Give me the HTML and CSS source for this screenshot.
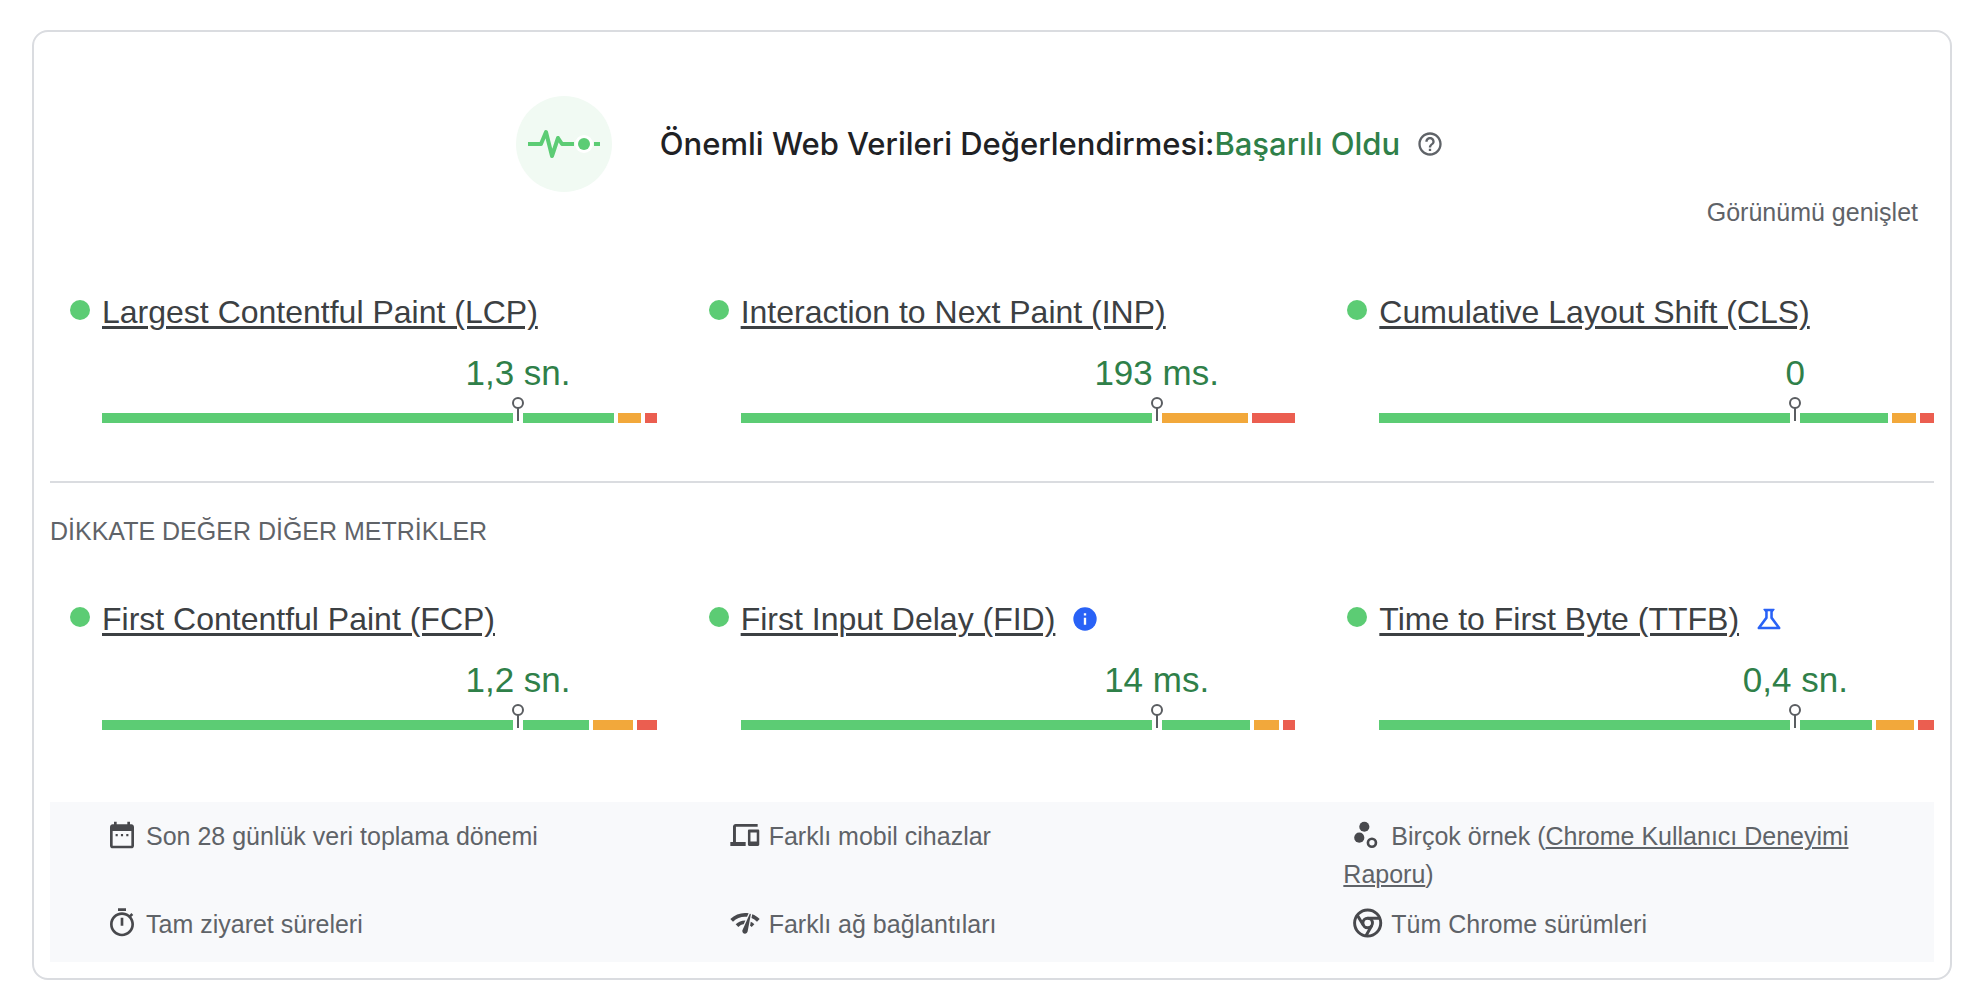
FILE: index.html
```html
<!DOCTYPE html>
<html lang="tr">
<head>
<meta charset="utf-8">
<meta name="viewport" content="width=device-width, initial-scale=1">
<title>Önemli Web Verileri</title>
<link rel="stylesheet" href="styles.css">
</head>
<body>
<svg class="sprite" aria-hidden="true">
  <symbol id="pin" viewBox="0 0 12 26"><circle cx="6" cy="6" r="5" fill="#fff" stroke="#5a5d61" stroke-width="2"/><path d="M6 11v13" stroke="#5a5d61" stroke-width="2"/></symbol>
</svg>
<main class="card">
  <header class="assessment">
    <svg class="pulse" viewBox="0 0 96 96" aria-hidden="true">
      <circle cx="48" cy="48" r="48" fill="#f1faf3"/>
      <path d="M12 48h13l5-12 6 24 6-18 4 6h12" fill="none" stroke="#5ccc74" stroke-width="4" stroke-linejoin="round"/>
      <circle cx="68" cy="48" r="9" fill="#fff"/>
      <circle cx="68" cy="48" r="6" fill="#5ccc74"/>
      <path d="M78 48h6" stroke="#5ccc74" stroke-width="4"/>
    </svg>
    <h1 class="verdict">Önemli Web Verileri Değerlendirmesi:<span class="passed">Başarılı Oldu</span></h1>
    <button class="help" type="button" aria-label="Yardım">
      <svg class="icon-small" viewBox="0 0 24 24" aria-hidden="true"><path fill="currentColor" d="M11 18h2v-2h-2v2zm1-16C6.480 2 2 6.480 2 12s4.480 10 10 10 10-4.480 10-10S17.520 2 12 2zm0 18c-4.410 0-8-3.590-8-8s3.590-8 8-8 8 3.590 8 8-3.590 8-8 8zm0-14c-2.210 0-4 1.790-4 4h2c0-1.100.9-2 2-2s2 .9 2 2c0 2-3 1.750-3 5h2c0-2.250 3-2.500 3-5 0-2.210-1.790-4-4-4z"/></svg>
    </button>
  </header>

  <button class="expand" type="button">Görünümü genişlet</button>

  <section class="metrics">
    <article class="metric">
      <h2 class="metric-title"><span class="dot"></span><a href="#lcp">Largest Contentful Paint (LCP)</a></h2>
      <p class="value">1,3 sn.</p>
      <div class="bar"><span class="lead"></span><svg class="pin"><use href="#pin"/></svg><div class="rest"><span class="good" style="flex-grow:91"></span><span class="average" style="flex-grow:23"></span><span class="poor" style="flex-grow:12"></span></div></div>
    </article>
    <article class="metric">
      <h2 class="metric-title"><span class="dot"></span><a href="#inp">Interaction to Next Paint (INP)</a></h2>
      <p class="value">193 ms.</p>
      <div class="bar"><span class="lead"></span><svg class="pin"><use href="#pin"/></svg><div class="rest"><span class="average" style="flex-grow:86"></span><span class="poor" style="flex-grow:43"></span></div></div>
    </article>
    <article class="metric">
      <h2 class="metric-title"><span class="dot"></span><a href="#cls">Cumulative Layout Shift (CLS)</a></h2>
      <p class="value">0</p>
      <div class="bar"><span class="lead"></span><svg class="pin"><use href="#pin"/></svg><div class="rest"><span class="good" style="flex-grow:88"></span><span class="average" style="flex-grow:24"></span><span class="poor" style="flex-grow:14"></span></div></div>
    </article>
  </section>

  <h2 class="section-title">DİKKATE DEĞER DİĞER METRİKLER</h2>

  <section class="metrics">
    <article class="metric">
      <h3 class="metric-title"><span class="dot"></span><a href="#fcp">First Contentful Paint (FCP)</a></h3>
      <p class="value">1,2 sn.</p>
      <div class="bar"><span class="lead"></span><svg class="pin"><use href="#pin"/></svg><div class="rest"><span class="good" style="flex-grow:66"></span><span class="average" style="flex-grow:40"></span><span class="poor" style="flex-grow:20"></span></div></div>
    </article>
    <article class="metric">
      <h3 class="metric-title"><span class="dot"></span><a href="#fid">First Input Delay (FID)</a>
        <svg class="icon-small blue" viewBox="0 0 24 24" aria-hidden="true"><circle cx="12" cy="12" r="10" fill="currentColor"/><path d="M11 7h2v2h-2zM11 11h2v6h-2z" fill="#fff"/></svg></h3>
      <p class="value">14 ms.</p>
      <div class="bar"><span class="lead"></span><svg class="pin"><use href="#pin"/></svg><div class="rest"><span class="good" style="flex-grow:88"></span><span class="average" style="flex-grow:25"></span><span class="poor" style="flex-grow:12"></span></div></div>
    </article>
    <article class="metric">
      <h3 class="metric-title"><span class="dot"></span><a href="#ttfb">Time to First Byte (TTFB)</a>
        <svg class="icon-small blue" viewBox="1 1 22 22" aria-hidden="true"><path fill="currentColor" d="M13 11.330L18 18H6l5-6.670V6h2m2.960-2H8.040c-.42 0-.65.48-.39.81L9 6.500v4.170L3.200 18.400c-.49.66-.02 1.600.8 1.600h16c.82 0 1.290-.94.8-1.600L15 10.670V6.500l1.350-1.690c.26-.33.03-.81-.39-.81z"/></svg></h3>
      <p class="value">0,4 sn.</p>
      <div class="bar"><span class="lead"></span><svg class="pin"><use href="#pin"/></svg><div class="rest"><span class="good" style="flex-grow:72"></span><span class="average" style="flex-grow:38"></span><span class="poor" style="flex-grow:16"></span></div></div>
    </article>
  </section>

  <ul class="facts">
    <li><svg class="icon" viewBox="0 0 24 24" aria-hidden="true"><path fill="currentColor" fill-rule="evenodd" d="M19 4h-1V2h-2v2H8V2H6v2H5c-1.100 0-2 .9-2 2v14c0 1.100.9 2 2 2h14c1.100 0 2-.9 2-2V6c0-1.100-.9-2-2-2zm0 16H5V9h14v11z"/><path fill="currentColor" d="M7.200 11.300h1.600v1.600H7.200zM11.200 11.300h1.600v1.600h-1.600zM15.200 11.300h1.600v1.600h-1.600z"/></svg>Son 28 günlük veri toplama dönemi</li>
    <li><svg class="icon" viewBox="0 0 24 24" aria-hidden="true"><path fill="currentColor" fill-rule="evenodd" d="M21.500 3.700H5c-1.100 0-2 .9-2 2v11.500H1v3h11.500v-3H5.200V5.800h16.300zM15.200 7.900h6.500c.6 0 1 .4 1 1v10.300c0 .6-.4 1-1 1h-6.500c-.6 0-1-.4-1-1V8.900c0-.6.4-1 1-1zm.9 2.300v6.600h4.700v-6.600z"/></svg>Farklı mobil cihazlar</li>
    <li><svg class="icon" viewBox="0 0 24 24" aria-hidden="true"><circle cx="10" cy="5.800" r="3.800" fill="currentColor"/><circle cx="6.200" cy="14" r="3.800" fill="currentColor"/><circle cx="15.700" cy="17.800" r="3" fill="none" stroke="currentColor" stroke-width="2"/></svg>Birçok örnek (<a href="#crux">Chrome Kullanıcı Deneyimi Raporu</a>)</li>
    <li><svg class="icon" viewBox="0 0 24 24" aria-hidden="true"><path fill="currentColor" d="M15 1H9v2h6V1zm-4 13h2V8h-2v6zm8.030-6.610l1.420-1.420c-.43-.51-.9-.99-1.410-1.410l-1.420 1.420C16.070 4.740 14.120 4 12 4c-4.970 0-9 4.030-9 9s4.020 9 9 9 9-4.030 9-9c0-2.120-.74-4.070-1.970-5.610zM12 20c-3.870 0-7-3.130-7-7s3.130-7 7-7 7 3.130 7 7-3.130 7-7 7z"/></svg>Tam ziyaret süreleri</li>
    <li><svg class="icon" viewBox="0 0 24 24" aria-hidden="true"><path fill="currentColor" d="M15.900 5c-.17 0-.32.09-.41.23l-.07.15-5.180 11.650c-.16.29-.26.61-.26.96 0 1.110.9 2.010 2.010 2.010.96 0 1.770-.68 1.960-1.590l.01-.03L16.400 5.500c0-.28-.22-.5-.5-.5zM1 9l2 2c2.880-2.880 6.790-4.080 10.530-3.620l1.190-2.680C9.890 3.840 4.740 5.270 1 9zm20 2l2-2c-1.640-1.640-3.550-2.820-5.590-3.570l-.53 2.820c1.500.62 2.900 1.530 4.120 2.750zm-4 4l2-2c-.8-.8-1.700-1.420-2.660-1.890l-.55 2.920c.42.27.83.59 1.210.97zM5 13l2 2c1.130-1.130 2.560-1.790 4.030-2l1.280-2.880c-2.630-.08-5.300.87-7.310 2.880z"/></svg>Farklı ağ bağlantıları</li>
    <li><svg class="icon" viewBox="0 0 24 24" aria-hidden="true"><g fill="none" stroke="currentColor" stroke-width="2.200"><circle cx="12.500" cy="12" r="9.800"/><circle cx="12.500" cy="12" r="3.600"/><path d="M12.500 8.400h9M9.400 13.800L4.700 6.100M15.600 13.800l-4.500 7.900"/></g></svg>Tüm Chrome sürümleri</li>
  </ul>
</main>
</body>
</html>
```
FILE: styles.css
```css
* {
  box-sizing: border-box;
}

body {
  margin: 0;
  padding: 30px 32px 28px;
  background: #fff;
  color: #5f6368;
  font: 25px/32px "Liberation Sans", Arial, sans-serif;
}

h1, h2, h3, p, ul {
  margin: 0;
  padding: 0;
  font-weight: 400;
}

button {
  border: 0;
  background: none;
  color: inherit;
  font: inherit;
  cursor: pointer;
}

.sprite {
  display: none;
}

.card {
  display: flex;
  flex-direction: column;
  padding: 64px 16px 16px;
  border: 2px solid #dadce0;
  border-radius: 16px;
}

.assessment {
  display: flex;
  align-items: center;
  justify-content: center;
}

.pulse {
  flex: none;
  width: 96px;
  height: 96px;
  margin-right: 48px;
}

.verdict {
  color: #202124;
  font: 500 31px/40px "Google Sans", Inter, sans-serif;
}

.passed {
  color: #2f8049;
}

.help {
  display: flex;
  padding: 0 24px 0 16px;
}

.icon-small {
  flex: none;
  width: 28px;
  height: 28px;
}

.expand {
  align-self: flex-end;
  margin-top: 4px;
  padding: 0 16px;
}

.metrics {
  display: grid;
  grid-template-columns: repeat(3, minmax(0, 1fr));
  gap: 32px;
}

.expand + .metrics {
  margin-top: 64px;
}

.metric {
  padding-left: 52px;
}

.metric-title {
  display: flex;
  align-items: center;
  margin-left: -32px;
  color: #3c4043;
  font-size: 32px;
  line-height: 40px;
}

.metric-title a {
  color: inherit;
  text-decoration-thickness: 3px;
  text-underline-offset: 3px;
}

.dot {
  flex: none;
  width: 20px;
  height: 20px;
  margin: 0 12px 4px 0;
  border-radius: 50%;
  background: #5ccc74;
}

.blue {
  margin-left: 16px;
  color: #2962f6;
}

.value {
  width: 50%;
  margin: 21px 0 4px 50%;
  color: #2f8049;
  font-size: 35px;
  line-height: 40px;
  text-align: center;
}

.bar {
  display: flex;
  align-items: flex-end;
}

.lead {
  flex: none;
  width: calc(75% - 5px);
  height: 10px;
  background: #5ccc74;
}

.pin {
  flex: none;
  width: 12px;
  height: 26px;
  margin: 0 -1px;
}

.rest {
  display: flex;
  flex: 1;
  gap: 4px;
  height: 10px;
}

.good {
  flex-basis: 0;
  background: #5ccc74;
}

.average {
  flex-basis: 0;
  background: #f2a83b;
}

.poor {
  flex-basis: 0;
  background: #eb5e50;
}

.section-title {
  margin: 58px 0 52px;
  padding-top: 32px;
  border-top: 2px solid #dadce0;
  font-size: 25px;
}

.facts {
  display: grid;
  grid-template-columns: repeat(3, minmax(0, 1fr));
  gap: 12px 32px;
  margin-top: 72px;
  padding: 15px 0 19px 48px;
  background: #f8f9fb;
  line-height: 38px;
  list-style: none;
}

.facts a {
  color: inherit;
  text-decoration-thickness: 2px;
  text-underline-offset: 2px;
}

.icon {
  width: 32px;
  height: 32px;
  margin: 0 8px;
  color: #48494d;
  vertical-align: -6px;
}
```
